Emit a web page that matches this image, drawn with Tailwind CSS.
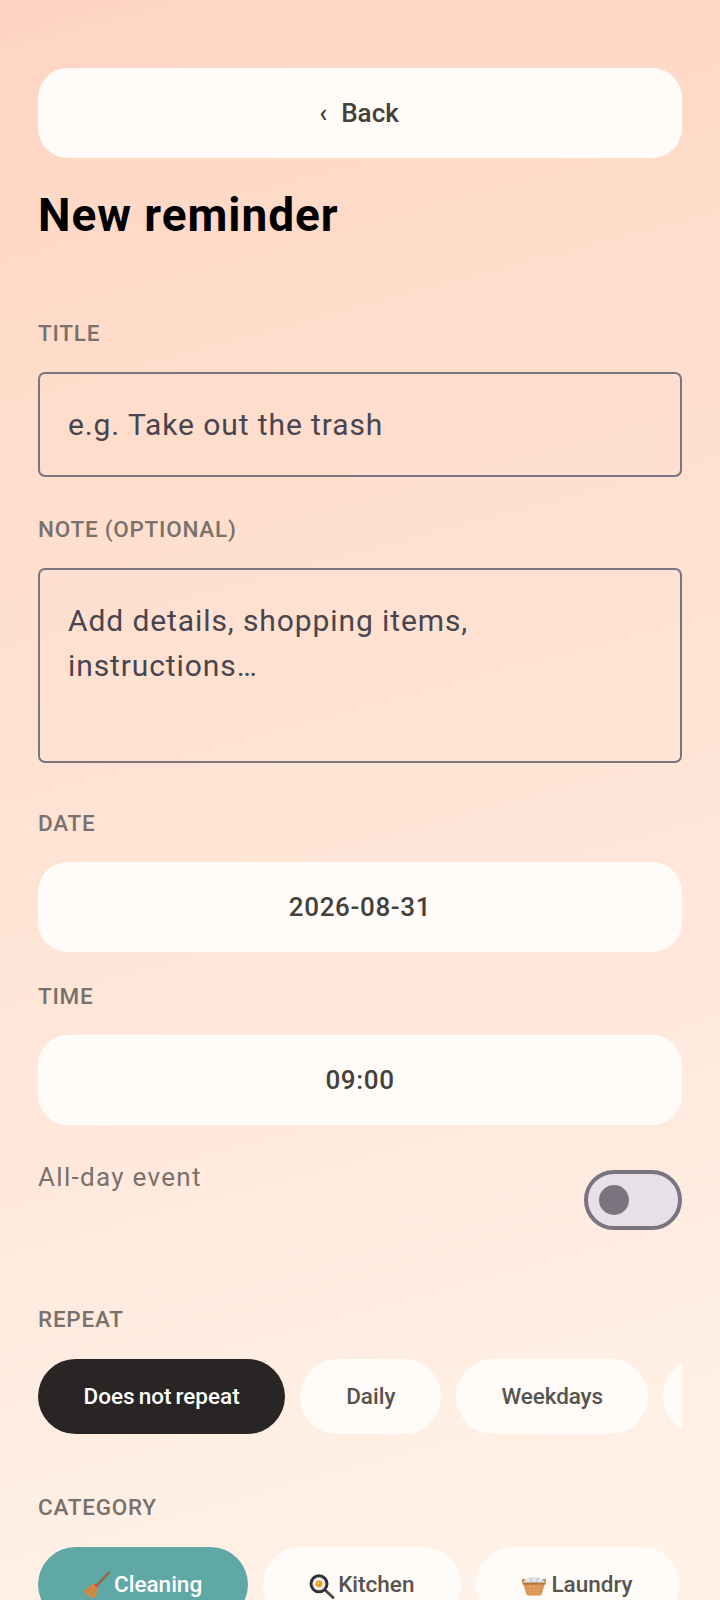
<!DOCTYPE html>
<html lang="en">
<head>
    <meta charset="UTF-8">
    <meta name="viewport" content="width=device-width, initial-scale=1.0">
    <title>New reminder</title>
    <script src="https://cdn.jsdelivr.net/npm/@tailwindcss/browser@4"></script>
</head>
<body class="font-['Roboto',sans-serif] m-0">
    <main class="h-[1600px] w-[720px] overflow-hidden bg-[linear-gradient(165deg,#ffd5c2_0%,#fff3e9_100%)] px-[38px] pt-[68px]">
        <button class="flex h-[90px] w-full items-center justify-center rounded-[30px] bg-[#fffbf8] pr-[2px] text-[26px] font-medium text-[#44403c]"><span class="mr-[14px]">‹</span>Back</button>
        <h1 class="mt-[29px] text-[46px] leading-[56px] font-bold tracking-[0.95px] text-black">New reminder</h1>

        <label class="mt-[75px] block text-[22.5px] leading-[30px] font-medium tracking-[0.75px] text-[#78716c]">TITLE</label>
        <input class="mt-[24px] block h-[105px] w-full rounded-[7px] border-2 border-[#79747e] bg-transparent px-[28px] text-[30px] tracking-[0.9px] placeholder:text-[#49454f]" placeholder="e.g. Take out the trash">

        <label class="mt-[37px] block text-[22.5px] leading-[30px] font-medium tracking-[0.75px] text-[#78716c]">NOTE (OPTIONAL)</label>
        <textarea class="mt-[24px] block h-[195px] w-full resize-none rounded-[7px] border-2 border-[#79747e] bg-transparent px-[28px] py-[28px] text-[30px] leading-[45px] tracking-[0.9px] placeholder:text-[#49454f]" placeholder="Add details, shopping items, instructions…"></textarea>

        <label class="mt-[45px] block text-[22.5px] leading-[30px] font-medium tracking-[0.75px] text-[#78716c]">DATE</label>
        <button class="mt-[24px] flex h-[90px] w-full items-center justify-center rounded-[30px] bg-[#fffbf8] text-[26px] font-medium tracking-[0.65px] text-[#44403c]">2026-08-31</button>

        <label class="mt-[29px] block text-[22.5px] leading-[30px] font-medium tracking-[0.75px] text-[#78716c]">TIME</label>
        <button class="mt-[24px] flex h-[90px] w-full items-center justify-center rounded-[30px] bg-[#fffbf8] text-[26px] font-medium tracking-[0.65px] text-[#44403c]">09:00</button>

        <div class="mt-[45px] flex items-start justify-between">
            <span class="mt-[-8px] text-[26px] leading-[30px] tracking-[1.3px] text-[#78716c]">All-day event</span>
            <div class="flex h-[60px] w-[98px] items-center rounded-full border-[4px] border-[#79747e] bg-[#e6e0e9] pl-[11px]">
                <div class="h-[30px] w-[30px] rounded-full bg-[#79747e]"></div>
            </div>
        </div>

        <label class="mt-[74px] block text-[22.5px] leading-[30px] font-medium tracking-[0.75px] text-[#78716c]">REPEAT</label>
        <div class="mt-[25px] flex gap-[15px] overflow-hidden">
            <span class="flex h-[75px] shrink-0 items-center rounded-full bg-[#292524] px-[45.5px] text-[22.5px] font-medium [word-spacing:-1.5px] text-white">Does not repeat</span>
            <span class="flex h-[75px] shrink-0 items-center rounded-full bg-[#fffbf8] px-[46px] text-[22.5px] font-medium text-[#57534e]">Daily</span>
            <span class="flex h-[75px] shrink-0 items-center rounded-full bg-[#fffbf8] px-[45px] text-[22.5px] font-medium tracking-[-0.1px] text-[#57534e]">Weekdays</span>
            <span class="h-[75px] w-[150px] shrink-0 rounded-full bg-[#fffbf8]"></span>
        </div>

        <label class="mt-[58px] block text-[22.5px] leading-[30px] font-medium tracking-[0.75px] text-[#78716c]">CATEGORY</label>
        <div class="mt-[25px] flex gap-[15px] overflow-hidden">
            <span class="flex h-[75px] shrink-0 items-center gap-[3px] rounded-full bg-[#5fa8a6] pr-[46px] pl-[45px] text-[22.5px] font-medium text-white">
                <svg width="28" height="28" viewBox="0 0 28 28" class="shrink-0">
                    <path d="M26 1.500 14 14" stroke="#9c6433" stroke-width="2.400" stroke-linecap="round"/>
                    <path d="M10 12.500.5 20Q5 26 12 27.500L15.500 16Z" fill="#cf8d45"/>
                    <path d="M4 20.500 10 16M8 24l5-6" stroke="#a96f30" stroke-width="1" opacity=".6"/>
                    <path d="M11.500 13 15 16.500" stroke="#e0476a" stroke-width="2.200"/>
                </svg>
                Cleaning
            </span>
            <span class="flex h-[75px] shrink-0 items-center gap-[2px] rounded-full bg-[#fffbf8] pr-[47px] pl-[45px] text-[22.5px] font-medium text-[#57534e]">
                <svg width="28" height="28" viewBox="0 0 28 28" class="shrink-0">
                    <path d="M17.500 19.500 25 26.500" stroke="#4a4a4a" stroke-width="3" stroke-linecap="round"/>
                    <circle cx="11" cy="12.800" r="8" fill="#f4f1ee" stroke="#333" stroke-width="3"/>
                    <circle cx="11" cy="12.800" r="3.400" fill="#f59a1b"/>
                    <circle cx="10.300" cy="11.900" r="1" fill="#ffd45e"/>
                </svg>
                Kitchen
            </span>
            <span class="flex h-[75px] shrink-0 items-center gap-[2px] rounded-full bg-[#fffbf8] pr-[46px] pl-[45px] text-[22.5px] font-medium text-[#57534e]">
                <svg width="28" height="28" viewBox="0 0 28 28" class="shrink-0">
                    <path d="M2.500 11.500C0 8.500 3 7.500 4.500 10M23.500 11.500c2.500-3-.5-4-2-1.500" fill="none" stroke="#b97a3c" stroke-width="1.500"/>
                    <path d="M3.500 12C3.500 8 8 6 13 6s9.500 2 9.500 6Z" fill="#dfe5ea"/>
                    <path d="M8.500 7c2 1.300 2.500 3 2 5M17.500 7c-1.500 1.300-2 3-1.500 5" fill="none" stroke="#aeb8c0" stroke-width="1"/>
                    <path d="M2 12H24L20.500 23.500Q20 24.500 18.500 24.500H7.500Q6 24.500 5.500 23.500Z" fill="#d68d4e"/>
                    <path d="M1.500 11.500H24.500V13.500H1.500Z" fill="#b9743a"/>
                    <path d="M3.500 16H22.500M4.500 19H21.500M5.500 22H20.500M8 14 10 24.500M13 14V24.500M18 14 16 24.500" stroke="#eab57e" stroke-width=".8" opacity=".8"/>
                </svg>
                Laundry
            </span>
        </div>
    </main>
</body>
</html>
